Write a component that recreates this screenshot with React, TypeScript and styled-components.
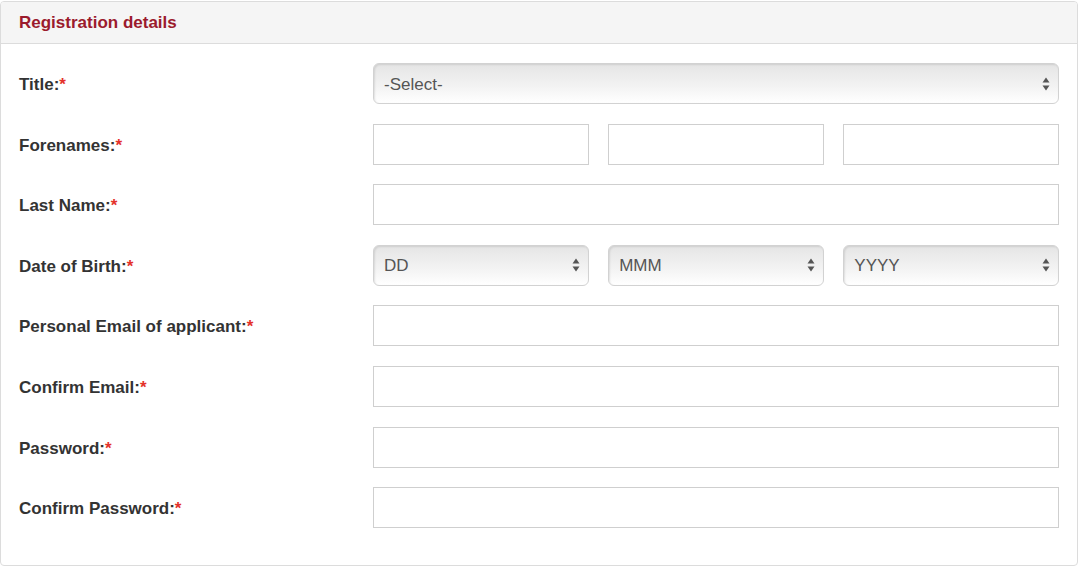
import React from "react";
import styled, { createGlobalStyle } from "styled-components";

const Global = createGlobalStyle`
  html, body { margin: 0; padding: 0; background: #fff; }
  body { font-family: "Liberation Sans", Arial, Helvetica, sans-serif; }
  * { box-sizing: border-box; }
`;

const Panel = styled.section`
  margin-top: 1px;
  width: 1078px;
  height: 565px;
  border: 1px solid #dcdcdc;
  border-radius: 4px;
  background: #fff;
  overflow: hidden;
`;

const Header = styled.header`
  height: 42px;
  background: #f5f5f5;
  border-bottom: 1px solid #dcdcdc;
  display: flex;
  align-items: center;
  padding: 1px 18px 0 18px;
`;

const HeaderTitle = styled.h3`
  margin: 0;
  font-size: 17px;
  font-weight: bold;
  color: #9b1b2d;
`;

const Body = styled.div`
  padding: 19px 18px 0 18px;
  display: flex;
  flex-direction: column;
  gap: 19.6px;
`;

const Row = styled.div`
  display: grid;
  grid-template-columns: 354px 1fr;
  align-items: center;
  height: 41px;
`;

const Label = styled.label`
  display: block;
  padding-top: 3px;
  font-size: 17px;
  font-weight: bold;
  color: #333;
`;

const Star = styled.span`
  color: #e4322b;
`;

const Fields = styled.div<{ $cols: number }>`
  display: grid;
  grid-template-columns: repeat(${(p) => p.$cols}, 1fr);
  column-gap: 19.5px;
  height: 41px;
`;

const TextInput = styled.input`
  height: 41px;
  width: 100%;
  border: 1px solid #cfcfcf;
  border-radius: 0;
  background: #fff;
  font-family: inherit;
  font-size: 17px;
  padding: 0 10px;
  outline: none;
`;

const SelectWrap = styled.div`
  position: relative;
  height: 41px;
`;

const NativeSelect = styled.select`
  appearance: none;
  -webkit-appearance: none;
  width: 100%;
  height: 41px;
  border: 1px solid #d2d2d2;
  border-radius: 6px;
  background: linear-gradient(#e5e5e5 0%, #f2f2f2 55%, #ffffff 100%);
  box-shadow: inset 1px 1px 2px rgba(0, 0, 0, 0.1);
  font-family: inherit;
  font-size: 17px;
  color: #555;
  padding: 1px 30px 0 10px;
  outline: none;
`;

const Arrows = styled.svg`
  position: absolute;
  right: 9px;
  top: 50%;
  transform: translateY(-50%);
  pointer-events: none;
`;

const SelectArrows = () => (
  <Arrows width="8" height="15" viewBox="0 0 8 15">
    <path d="M4 1 L7.5 6 L0.5 6 Z" fill="#555" />
    <path d="M0.5 9 L7.5 9 L4 14 Z" fill="#555" />
  </Arrows>
);

const Select = ({ placeholder }: { placeholder: string }) => (
  <SelectWrap>
    <NativeSelect defaultValue="">
      <option value="">{placeholder}</option>
    </NativeSelect>
    <SelectArrows />
  </SelectWrap>
);

const Req = ({ text }: { text: string }) => (
  <Label>
    {text}
    <Star>*</Star>
  </Label>
);

export default function App() {
  return (
    <>
      <Global />
      <Panel>
        <Header>
          <HeaderTitle>Registration details</HeaderTitle>
        </Header>
        <Body>
          <Row>
            <Req text="Title:" />
            <Fields $cols={1}>
              <Select placeholder="-Select-" />
            </Fields>
          </Row>
          <Row>
            <Req text="Forenames:" />
            <Fields $cols={3}>
              <TextInput />
              <TextInput />
              <TextInput />
            </Fields>
          </Row>
          <Row>
            <Req text="Last Name:" />
            <Fields $cols={1}>
              <TextInput />
            </Fields>
          </Row>
          <Row>
            <Req text="Date of Birth:" />
            <Fields $cols={3}>
              <Select placeholder="DD" />
              <Select placeholder="MMM" />
              <Select placeholder="YYYY" />
            </Fields>
          </Row>
          <Row>
            <Req text="Personal Email of applicant:" />
            <Fields $cols={1}>
              <TextInput type="email" />
            </Fields>
          </Row>
          <Row>
            <Req text="Confirm Email:" />
            <Fields $cols={1}>
              <TextInput type="email" />
            </Fields>
          </Row>
          <Row>
            <Req text="Password:" />
            <Fields $cols={1}>
              <TextInput type="password" />
            </Fields>
          </Row>
          <Row>
            <Req text="Confirm Password:" />
            <Fields $cols={1}>
              <TextInput type="password" />
            </Fields>
          </Row>
        </Body>
      </Panel>
    </>
  );
}
